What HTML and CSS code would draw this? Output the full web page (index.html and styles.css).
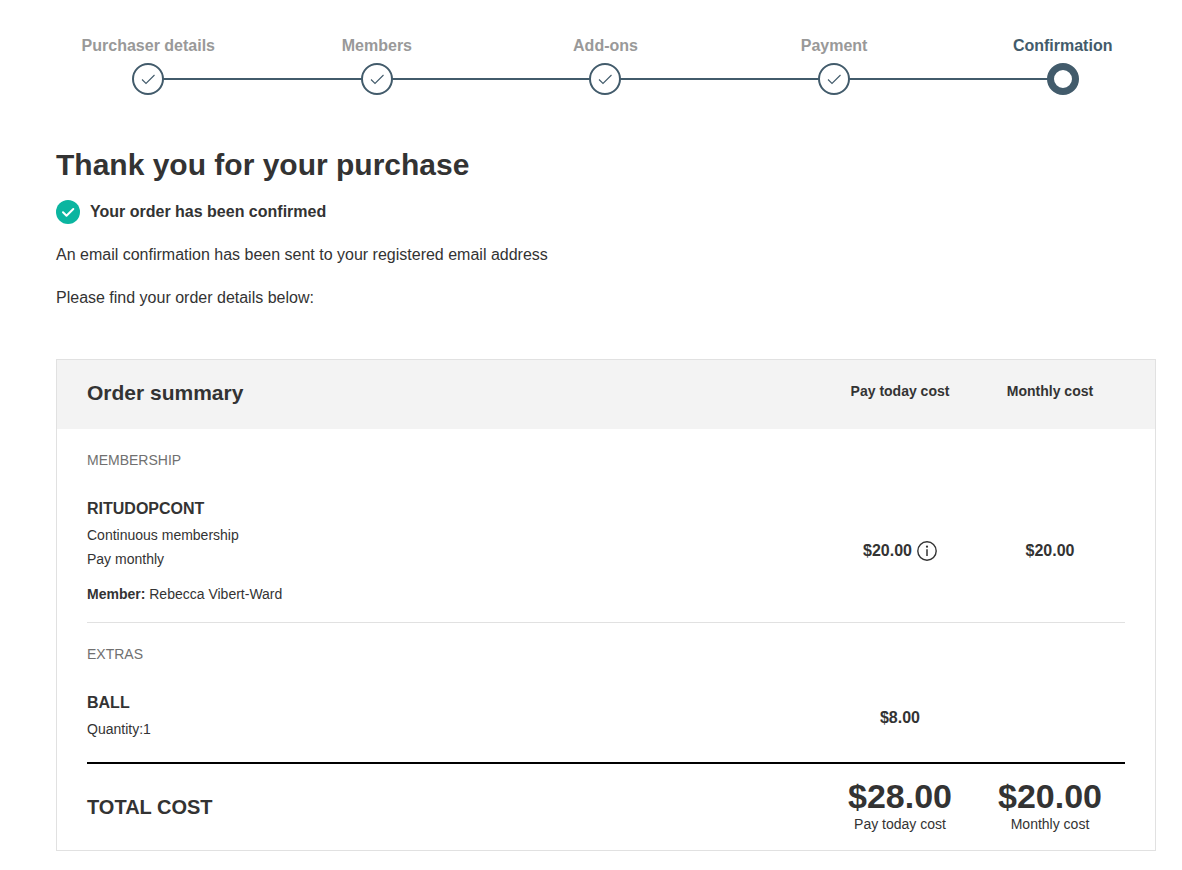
FILE: index.html
```html
<!DOCTYPE html>
<html lang="en">
<head>
    <meta charset="UTF-8">
    <meta name="viewport" content="width=device-width, initial-scale=1.0">
    <title>Order confirmation</title>
    <link rel="stylesheet" href="styles.css">
</head>
<body>
    <!-- Checkout progress -->
    <ol class="steps">
        <li class="step">
            <span class="step-label">Purchaser details</span>
            <span class="step-dot"><svg width="16" height="16" viewBox="0 0 16 16"><path d="M2 8.5L6 12.5L14.5 4"/></svg></span>
        </li>
        <li class="step">
            <span class="step-label">Members</span>
            <span class="step-dot"><svg width="16" height="16" viewBox="0 0 16 16"><path d="M2 8.5L6 12.5L14.5 4"/></svg></span>
        </li>
        <li class="step">
            <span class="step-label">Add-ons</span>
            <span class="step-dot"><svg width="16" height="16" viewBox="0 0 16 16"><path d="M2 8.5L6 12.5L14.5 4"/></svg></span>
        </li>
        <li class="step">
            <span class="step-label">Payment</span>
            <span class="step-dot"><svg width="16" height="16" viewBox="0 0 16 16"><path d="M2 8.5L6 12.5L14.5 4"/></svg></span>
        </li>
        <li class="step current" aria-current="step">
            <span class="step-label">Confirmation</span>
            <span class="step-dot"></span>
        </li>
    </ol>

    <main class="container">
        <h1>Thank you for your purchase</h1>
        <div class="confirmed">
            <svg width="24" height="24" viewBox="0 0 24 24">
                <circle cx="12" cy="12" r="12" fill="#0bb5a0"/>
                <path d="M7 12.3L10.5 15.7L17.3 9" fill="none" stroke="#fff" stroke-width="2" stroke-linecap="round" stroke-linejoin="round"/>
            </svg>
            <strong>Your order has been confirmed</strong>
        </div>
        <p>An email confirmation has been sent to your registered email address</p>
        <p>Please find your order details below:</p>

        <!-- Order summary -->
        <section class="summary">
            <table>
                <thead>
                    <tr>
                        <th class="title" scope="col"><h2>Order summary</h2></th>
                        <th class="cost" scope="col">Pay today cost</th>
                        <th class="cost" scope="col">Monthly cost</th>
                    </tr>
                </thead>
                <tbody>
                    <tr class="category">
                        <td colspan="3">MEMBERSHIP</td>
                    </tr>
                    <tr class="item">
                        <td>
                            <h3>RITUDOPCONT</h3>
                            <div>Continuous membership</div>
                            <div>Pay monthly</div>
                            <div class="member"><strong>Member:</strong> Rebecca Vibert-Ward</div>
                        </td>
                        <td class="cost">
                            <span class="price">$20.00
                                <button type="button" class="info" aria-label="More information">
                                    <svg width="20" height="20" viewBox="0 0 20 20">
                                        <circle cx="10" cy="10" r="9.2" fill="none" stroke="#333" stroke-width="1.4"/>
                                        <circle cx="10" cy="5.7" r="1.1" fill="#333"/>
                                        <path d="M10 8.2V15" stroke="#333" stroke-width="1.5"/>
                                    </svg>
                                </button>
                            </span>
                        </td>
                        <td class="cost">$20.00</td>
                    </tr>
                </tbody>
                <tbody>
                    <tr class="category">
                        <td colspan="3">EXTRAS</td>
                    </tr>
                    <tr class="item last">
                        <td>
                            <h3>BALL</h3>
                            <div>Quantity:1</div>
                        </td>
                        <td class="cost">$8.00</td>
                        <td class="cost"></td>
                    </tr>
                </tbody>
                <tfoot>
                    <tr>
                        <th class="total" scope="row">TOTAL COST</th>
                        <td class="cost"><div class="amount">$28.00</div>Pay today cost</td>
                        <td class="cost"><div class="amount">$20.00</div>Monthly cost</td>
                    </tr>
                </tfoot>
            </table>
        </section>
    </main>
</body>
</html>
```
FILE: styles.css
```css
* {
    box-sizing: border-box;
}
body {
    margin: 0;
    background: #fff;
    color: #333;
    font-family: Arial, "Liberation Sans", sans-serif;
    font-size: 16px;
    line-height: 24px;
}
h1, h2, h3, p {
    margin: 0;
}

/* Progress steps */
.steps {
    display: flex;
    list-style: none;
    margin: 0 5px 0 34px;
    padding: 34px 0 0;
}
.step {
    flex: 1;
    position: relative;
    display: flex;
    flex-direction: column;
    align-items: center;
    gap: 5px;
    color: #999;
    font-weight: bold;
}
.step + .step::before {
    content: "";
    position: absolute;
    right: 50%;
    bottom: 15px;
    width: 100%;
    height: 2px;
    background: #425b6b;
}
.step-dot {
    position: relative;
    z-index: 1;
    display: flex;
    align-items: center;
    justify-content: center;
    width: 32px;
    height: 32px;
    border: 2px solid #425b6b;
    border-radius: 50%;
    background: #fff;
}
.step-dot path {
    fill: none;
    stroke: #425b6b;
    stroke-width: 1.1;
}
.current {
    color: #425b6b;
}
.current .step-dot {
    border-width: 7px;
}

.container {
    margin: 0 26px 20px 56px;
}
h1 {
    padding-top: 50px;
    font-size: 30px;
    line-height: 40px;
}
.confirmed {
    display: flex;
    align-items: center;
    gap: 10px;
    margin: 15px 0 19px;
}
p {
    margin-bottom: 19px;
}

/* Order summary card */
.summary {
    margin-top: 49px;
    padding: 0 30px;
    border: 1px solid #e1e1e1;
    overflow: hidden;
}
table {
    width: 100%;
    table-layout: fixed;
    border-spacing: 0;
}
th, td {
    padding: 0;
    text-align: left;
}
.cost {
    width: 150px;
    text-align: center;
}
thead th {
    height: 69px;
    padding-bottom: 7px;
    background: #f3f3f3;
    font-size: 14px;
}
thead .title {
    padding-bottom: 3px;
}
/* carry the grey band out over the card's side padding */
thead th:first-child {
    box-shadow: -30px 0 #f3f3f3;
}
thead th:last-child {
    box-shadow: 30px 0 #f3f3f3;
}
h2 {
    font-size: 21px;
}
.category td {
    padding: 20px 0 9px;
    color: #707070;
    font-size: 14px;
    line-height: 22px;
}
.item td {
    padding: 17px 0 16px;
    border-bottom: 1px solid #e1e1e1;
    font-size: 14px;
}
.item .cost {
    padding: 0;
    font-size: 16px;
    font-weight: bold;
}
.item.last td {
    border-bottom: 2px solid #000;
}
.item.last td:first-child {
    padding-bottom: 21px;
}
h3 {
    margin-bottom: 2px;
    font-size: 16px;
}
.member {
    margin-top: 11px;
}
.price {
    display: flex;
    align-items: center;
    justify-content: center;
    gap: 5px;
}
.info {
    display: flex;
    padding: 0;
    border: none;
    background: none;
    cursor: pointer;
}
tfoot .cost {
    height: 86px;
    padding-bottom: 2px;
    font-size: 14px;
    line-height: 20px;
}
.total {
    font-size: 20px;
}
.amount {
    font-size: 34px;
    font-weight: bold;
    line-height: 36px;
}
```
